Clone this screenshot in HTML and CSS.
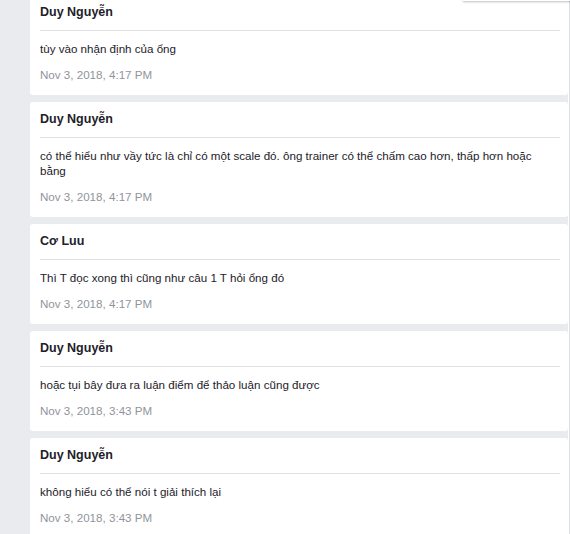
FILE: index.html
```html
<!DOCTYPE html>
<html lang="vi">
<head>
<meta charset="utf-8">
<title>Messages</title>
<link rel="stylesheet" href="styles.css">
</head>
<body>
<div class="page">
  <div class="list">
    <div class="card">
      <div class="name">Duy Nguyễn</div>
      <div class="msg">tùy vào nhận định của ổng</div>
      <div class="date">Nov 3, 2018, 4:17 PM</div>
    </div>
    <div class="card">
      <div class="name">Duy Nguyễn</div>
      <div class="msg">có thể hiểu như vầy tức là chỉ có một scale đó. ông trainer có thể chấm cao hơn, thấp hơn hoặc bằng</div>
      <div class="date">Nov 3, 2018, 4:17 PM</div>
    </div>
    <div class="card">
      <div class="name">Cơ Luu</div>
      <div class="msg">Thì T đọc xong thì cũng như câu 1 T hỏi ổng đó</div>
      <div class="date">Nov 3, 2018, 4:17 PM</div>
    </div>
    <div class="card">
      <div class="name">Duy Nguyễn</div>
      <div class="msg">hoặc tụi bây đưa ra luận điểm để thảo luận cũng được</div>
      <div class="date">Nov 3, 2018, 3:43 PM</div>
    </div>
    <div class="card">
      <div class="name">Duy Nguyễn</div>
      <div class="msg">không hiểu có thể nói t giải thích lại</div>
      <div class="date">Nov 3, 2018, 3:43 PM</div>
    </div>
  </div>
  <div class="edge"></div>
</div>
<div class="popover"></div>
</body>
</html>
```

FILE: styles.css
```css
html, body {
  margin: 0;
  padding: 0;
  height: 100%;
  overflow: hidden;
}
body {
  background: #e9ebee;
  font-family: "Liberation Sans", Arial, Helvetica, sans-serif;
  color: #1d2129;
}
.page {
  display: flex;
  padding-left: 30px;
}
.list {
  width: 538px;
  display: flex;
  flex-direction: column;
  gap: 7px;
  margin-top: -5px;
}
.card {
  background: #fff;
  border-radius: 3px;
  padding: 0 8px 13px 10px;
}
.name {
  font-weight: bold;
  font-size: 12.5px;
  line-height: 14px;
  padding-top: 10px;
  height: 25px;
  border-bottom: 1px solid #dddfe2;
}
.msg {
  font-size: 11.6px;
  line-height: 15px;
  padding-top: 10px;
  padding-right: 2px;
}
.date {
  font-size: 11.6px;
  line-height: 15px;
  padding-top: 11px;
  color: #90949c;
}
.edge {
  width: 2px;
  background: #fff;
  border-right: 1px solid #dadde1;
  box-sizing: border-box;
}
.popover {
  position: absolute;
  top: -10px;
  left: 463px;
  width: 120px;
  height: 11px;
  background: #fff;
  box-shadow: 0 1px 2px rgba(0, 0, 0, 0.25);
}
```
